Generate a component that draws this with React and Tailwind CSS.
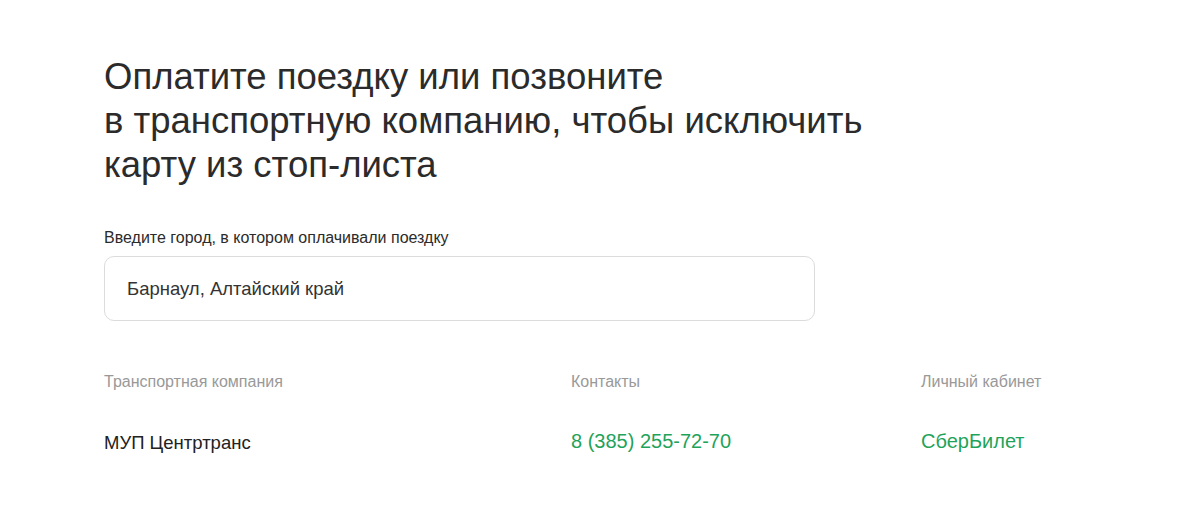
export default function App() {
  return (
    <div className="min-h-screen bg-white" style={{ fontFamily: '"Liberation Sans", Arial, sans-serif' }}>
      <div className="pl-[104px] pt-[55px] w-[1100px]">
        <h1 className="text-[36.5px] leading-[44px] text-[#2b2b2b] font-normal">
          Оплатите поездку или позвоните
          <br />
          в транспортную компанию, чтобы исключить
          <br />
          карту из стоп-листа
        </h1>

        <div className="mt-[41px]">
          <label className="block text-[16px] leading-[20px] text-[#2b2b2b]">
            Введите город, в котором оплачивали поездку
          </label>
          <div className="mt-[8px] w-[711px] h-[65px] rounded-[10px] border border-[#dcdcdc] flex items-center px-[22px]">
            <span className="text-[18.5px] text-[#333333]">Барнаул, Алтайский край</span>
          </div>
        </div>

        <div className="mt-[49px] grid grid-cols-[467px_350px_1fr] text-[16px] text-[#999999]">
          <div>Транспортная компания</div>
          <div>Контакты</div>
          <div>Личный кабинет</div>
        </div>
        <div className="mt-[31px] grid grid-cols-[467px_350px_1fr] items-center">
          <div className="text-[18.5px] text-[#222222] pt-[4px]">МУП Центртранс</div>
          <a className="text-[20px] text-[#1fa35a]">8 (385) 255-72-70</a>
          <a className="text-[20px] text-[#1fa35a]">СберБилет</a>
        </div>
      </div>
    </div>
  );
}
